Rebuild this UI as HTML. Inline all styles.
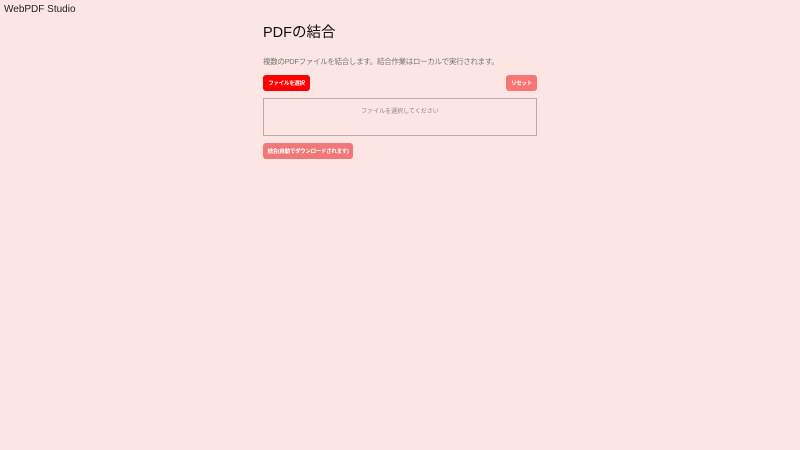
<!DOCTYPE html>
<html><head><meta charset="utf-8"><style>
body{margin:0;width:800px;height:450px;background:#fde5e3;font-family:"Liberation Sans","Noto Sans CJK JP",sans-serif;position:relative;overflow:hidden}
.abs{position:absolute;white-space:nowrap}
.btn{position:absolute;border-radius:3px;color:#fff;font-size:5.5px;letter-spacing:-0.3px;font-weight:bold;display:flex;align-items:center;justify-content:center;white-space:nowrap}
</style></head><body>
<div class="abs" style="left:4px;top:4px;font-size:10px;color:#222">WebPDF Studio</div>
<div class="abs" style="left:263px;top:21px;font-size:14.5px;color:#111">PDFの結合</div>
<div class="abs" style="left:263px;top:56px;font-size:7.6px;letter-spacing:-0.4px;color:#777">複数のPDFファイルを結合します。結合作業はローカルで実行されます。</div>
<div class="btn" style="left:263px;top:75px;width:47px;height:16px;background:#ff0000">ファイルを選択</div>
<div class="btn" style="left:506px;top:75px;width:31px;height:16px;background:#f77575">リセット</div>
<div class="abs" style="left:263px;top:98px;width:272px;height:36px;border:1px solid #bca9a8"></div>
<div class="abs" style="left:263px;top:106px;width:274px;text-align:center;font-size:6px;color:#888">ファイルを選択してください</div>
<div class="btn" style="left:263px;top:143px;width:90px;height:16px;background:#f07878">結合(自動でダウンロードされます)</div>
</body></html>
